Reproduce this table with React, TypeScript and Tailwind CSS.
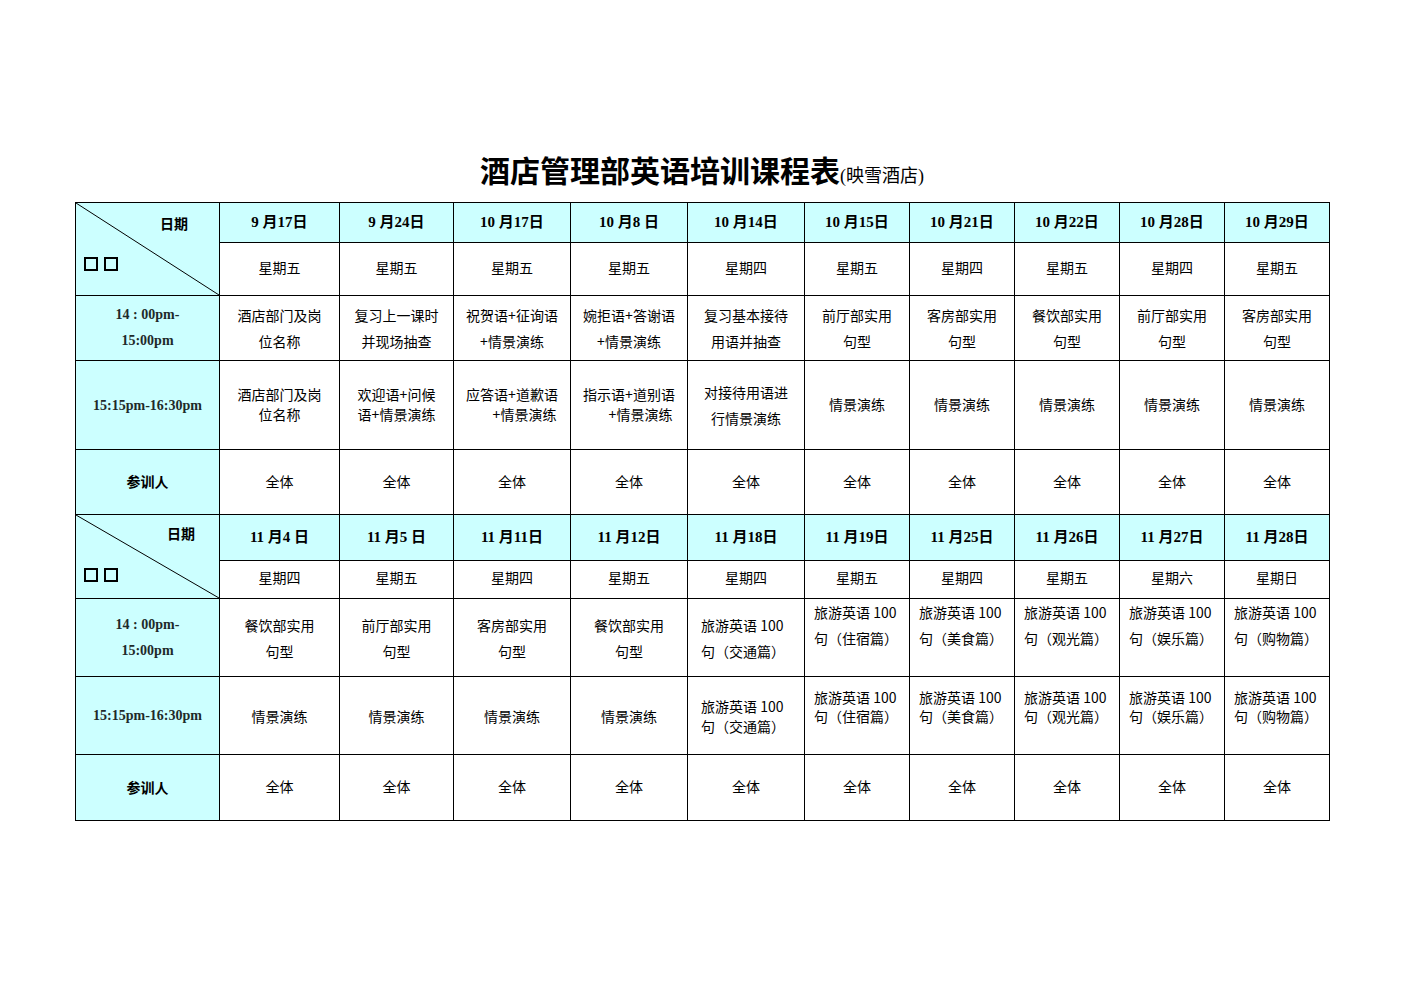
import type { ReactNode } from "react";

const serif = "font-['Liberation_Serif','Noto_Sans_CJK_SC',serif]";
const sans = "font-['Noto_Sans_CJK_SC',sans-serif]";

type Line = string | { t: string; cls: string };
type Entry = { lines: Line[]; cls?: string };

type Block = {
  dates: string[];
  weekdays: string[];
  first: Entry[];
  second: Entry[];
  rows: { date: string; week: string; first: string; second: string; people: string };
  corner: { top: string; bottom: string };
};

const e = (lines: Line[], cls?: string): Entry => ({ lines, cls });
const drill = e(["情景演练"], "leading-[26px]");
const pair = "leading-[26px]";

const blocks: Block[] = [
  {
    dates: ["9 月17日", "9 月24日", "10 月17日", "10 月8 日", "10 月14日", "10 月15日", "10 月21日", "10 月22日", "10 月28日", "10 月29日"],
    weekdays: ["五", "五", "五", "五", "四", "五", "四", "五", "四", "五"],
    first: [
      e(["酒店部门及岗", "位名称"], pair),
      e(["复习上一课时", "并现场抽查"], pair),
      e(["祝贺语+征询语", "+情景演练"], pair),
      e(["婉拒语+答谢语", "+情景演练"], pair),
      e(["复习基本接待", "用语并抽查"], pair),
      e(["前厅部实用", "句型"], pair),
      e(["客房部实用", "句型"], pair),
      e(["餐饮部实用", "句型"], pair),
      e(["前厅部实用", "句型"], pair),
      e(["客房部实用", "句型"], pair),
    ],
    second: [
      e(["酒店部门及岗", "位名称"], "leading-[20px] pb-[3px]"),
      e(["欢迎语+问候", "语+情景演练"], "leading-[20px] pb-[3px]"),
      e(["应答语+道歉语", { t: "+情景演练", cls: "pl-[25px]" }], "leading-[20px] pb-[3px]"),
      e(["指示语+道别语", { t: "+情景演练", cls: "pl-[23px]" }], "leading-[20px] pb-[3px]"),
      e(["对接待用语进", "行情景演练"], "leading-[26px]"),
      e(["情景演练"], "leading-[26px] pb-[2px]"),
      e(["情景演练"], "leading-[26px] pb-[2px]"),
      e(["情景演练"], "leading-[26px] pb-[2px]"),
      e(["情景演练"], "leading-[26px] pb-[2px]"),
      e(["情景演练"], "leading-[26px] pb-[2px]"),
    ],
    rows: { date: "h-[40px]", week: "h-[53px]", first: "h-[65px]", second: "h-[89px]", people: "h-[65px]" },
    corner: { top: "h-[40px] pr-[31px]", bottom: "pl-[8px] pt-[14px]" },
  },
  {
    dates: ["11 月4 日", "11 月5 日", "11 月11日", "11 月12日", "11 月18日", "11 月19日", "11 月25日", "11 月26日", "11 月27日", "11 月28日"],
    weekdays: ["四", "五", "四", "五", "四", "五", "四", "五", "六", "日"],
    first: [
      e(["餐饮部实用", "句型"], pair),
      e(["前厅部实用", "句型"], pair),
      e(["客房部实用", "句型"], pair),
      e(["餐饮部实用", "句型"], pair),
      e(["旅游英语 100", "句（交通篇）"], "leading-[26px] text-left pl-[13px]"),
      e(["旅游英语 100", "句（住宿篇）"], "leading-[26px] align-top text-left pl-[9px]"),
      e(["旅游英语 100", "句（美食篇）"], "leading-[26px] align-top text-left pl-[9px]"),
      e(["旅游英语 100", "句（观光篇）"], "leading-[26px] align-top text-left pl-[9px]"),
      e(["旅游英语 100", "句（娱乐篇）"], "leading-[26px] align-top text-left pl-[9px]"),
      e(["旅游英语 100", "句（购物篇）"], "leading-[26px] align-top text-left pl-[9px]"),
    ],
    second: [
      drill,
      drill,
      drill,
      drill,
      e(["旅游英语 100", "句（交通篇）"], "text-left pl-[13px] leading-[20px]"),
      e(["旅游英语 100", "句（住宿篇）"], "align-top text-left pl-[9px] pt-[11px] leading-[19px]"),
      e(["旅游英语 100", "句（美食篇）"], "align-top text-left pl-[9px] pt-[11px] leading-[19px]"),
      e(["旅游英语 100", "句（观光篇）"], "align-top text-left pl-[9px] pt-[11px] leading-[19px]"),
      e(["旅游英语 100", "句（娱乐篇）"], "align-top text-left pl-[9px] pt-[11px] leading-[19px]"),
      e(["旅游英语 100", "句（购物篇）"], "align-top text-left pl-[9px] pt-[11px] leading-[19px]"),
    ],
    rows: { date: "h-[46px]", week: "h-[38px]", first: "h-[78px]", second: "h-[78px]", people: "h-[66px]" },
    corner: { top: "h-[36px] pr-[24px]", bottom: "pl-[8px] pt-[17px]" },
  },
];

const widths = ["w-[144px]", "w-[120px]", "w-[114px]", "w-[117px]", "w-[117px]", "w-[117px]", "w-[105px]", "w-[105px]", "w-[105px]", "w-[105px]", "w-[105px]"];

const td = "border border-black p-0 text-center align-middle";
const head = `${td} bg-[#ccffff] ${serif} font-bold text-[14px] text-[#1e2a2a]`;
const body = `${td} bg-white ${sans} text-[14px] text-black`;

function Lines({ lines }: { lines: Line[] }) {
  return (
    <>
      {lines.map((line, i) =>
        typeof line === "string" ? (
          <div key={i} className="whitespace-nowrap">{line}</div>
        ) : (
          <div key={i} className={`whitespace-nowrap ${line.cls}`}>{line.t}</div>
        ),
      )}
    </>
  );
}

// the two hollow boxes are missing-glyph marks in the source sheet
function Tofu() {
  return <span className="inline-block h-[14px] w-[14px] border-2 border-black" />;
}

function Corner({ block }: { block: Block }) {
  return (
    <td rowSpan={2} className={`${td} relative bg-[#ccffff] align-top`}>
      <svg className="pointer-events-none absolute inset-0 h-full w-full" preserveAspectRatio="none" viewBox="0 0 100 100">
        <line x1="0" y1="0" x2="100" y2="100" stroke="black" strokeWidth="1" vectorEffect="non-scaling-stroke" />
      </svg>
      <div className={`flex items-center justify-end ${block.corner.top} ${sans} text-[14px] font-bold`}>日期</div>
      <div className={`flex gap-[6px] ${block.corner.bottom}`}>
        <Tofu />
        <Tofu />
      </div>
    </td>
  );
}

function Row({ cls, label, children }: { cls: string; label: ReactNode; children: ReactNode }) {
  return (
    <tr className={cls}>
      <td className={head}>{label}</td>
      {children}
    </tr>
  );
}

function BlockRows({ block }: { block: Block }) {
  return (
    <>
      <tr className={block.rows.date}>
        <Corner block={block} />
        {block.dates.map((d) => (
          <td key={d} className={`${head} text-[15px] text-black`}>{d}</td>
        ))}
      </tr>
      <tr className={block.rows.week}>
        {block.weekdays.map((w, i) => (
          <td key={i} className={`${body} pb-[4px]`}>星期{w}</td>
        ))}
      </tr>
      <Row cls={block.rows.first} label={<div className="leading-[26px]"><div>14 : 00pm-</div><div>15:00pm</div></div>}>
        {block.first.map((c, i) => (
          <td key={i} className={`${body} ${c.cls ?? ""}`}><Lines lines={c.lines} /></td>
        ))}
      </Row>
      <Row cls={block.rows.second} label={<span>15:15pm-16:30pm</span>}>
        {block.second.map((c, i) => (
          <td key={i} className={`${body} ${c.cls ?? ""}`}><Lines lines={c.lines} /></td>
        ))}
      </Row>
      <Row cls={block.rows.people} label={<span className={`${sans} text-[14px] text-black`}>参训人</span>}>
        {block.dates.map((d) => (
          <td key={d} className={`${body} pb-[2px]`}>全体</td>
        ))}
      </Row>
    </>
  );
}

export default function App() {
  return (
    <main className="min-h-[993px] w-full bg-white pt-[152px]">
      <div className="mx-auto w-[1254px]">
        <h1 className={`mb-[10px] h-[40px] text-center leading-[40px] ${serif} font-bold text-black`}>
          <span className="text-[30px]">酒店管理部英语培训课程表</span>
          <span className="text-[18px] font-normal">(映雪酒店)</span>
        </h1>
        <table className="w-[1254px] table-fixed border-collapse border border-black">
          <colgroup>
            {widths.map((w, i) => (
              <col key={i} className={w} />
            ))}
          </colgroup>
          <tbody>
            {blocks.map((b, i) => (
              <BlockRows key={i} block={b} />
            ))}
          </tbody>
        </table>
      </div>
    </main>
  );
}
